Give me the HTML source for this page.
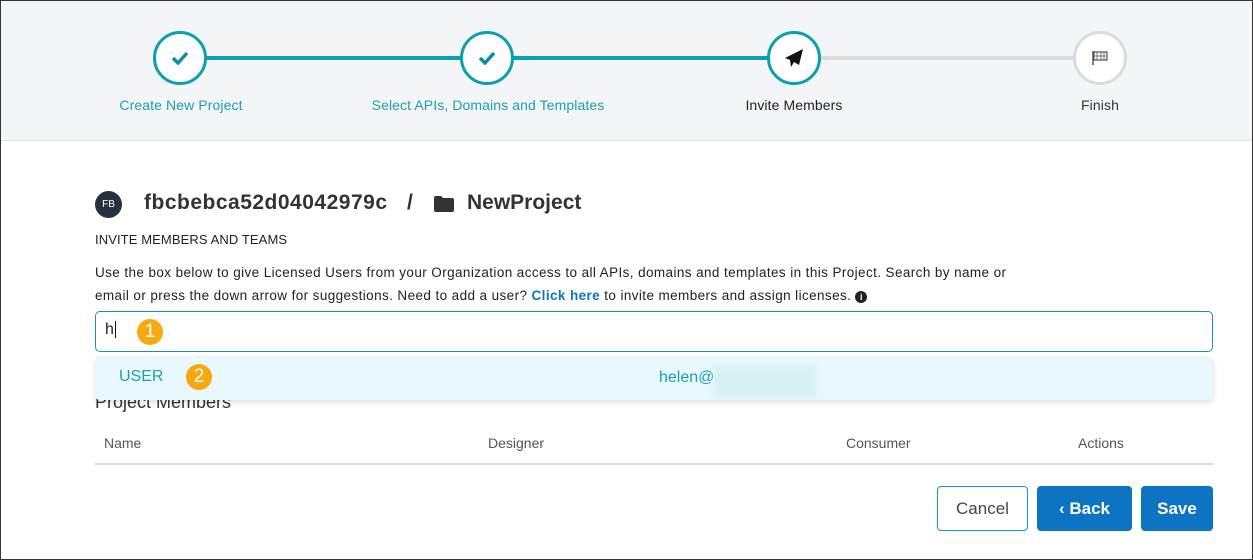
<!DOCTYPE html><html><head><style>
*{box-sizing:border-box;margin:0;padding:0}
body{width:1253px;height:560px;overflow:hidden;font-family:"Liberation Sans",sans-serif;background:#fff;position:relative}
.top{position:absolute;left:0;top:0;width:1253px;height:141px;background:#f4f5f7;border-bottom:1px solid #e3e5e8}
.line{position:absolute;height:4px;top:56px}
.c{position:absolute;width:54px;height:54px;border-radius:50%;background:#fff;border:3px solid #0c9fb0;top:31px;display:flex;align-items:center;justify-content:center}
.lbl{position:absolute;top:97px;font-size:14px;color:#1a9fb4;width:300px;text-align:center;letter-spacing:.1px}
.abs{position:absolute}
.btn{position:absolute;top:486px;height:45px;border-radius:4px;font-size:17px;display:flex;align-items:center;justify-content:center}
</style></head><body>
<div class="top">
<div class="line" style="left:206px;width:564px;background:#0c9fb0"></div>
<div class="line" style="left:820px;width:256px;background:#d8dce1"></div>
<div class="c" style="left:153px"><svg width="18" height="14" viewBox="0 0 18 14"><path d="M2 7l5 5L16 2" stroke="#0c8fa2" stroke-width="3.5" fill="none"/></svg></div>
<div class="c" style="left:460px"><svg width="18" height="14" viewBox="0 0 18 14"><path d="M2 7l5 5L16 2" stroke="#0c8fa2" stroke-width="3.5" fill="none"/></svg></div>
<div class="c" style="left:767px"><svg width="20" height="20" viewBox="0 0 20 20"><path d="M19 1L1 10l5 2 1 7 3-5 5 3z" fill="#111"/></svg></div>
<div class="c" style="left:1073px;border-color:#d8dce1"><svg width="18" height="16" viewBox="0 0 18 16"><path d="M2 1v14" stroke="#555" stroke-width="1.5"/><path d="M3 2h13v8H3z" fill="none" stroke="#555" stroke-width="1.2"/><path d="M6 2v8M10 2v8M13 2v8M3 6h13" stroke="#777" stroke-width="1"/></svg></div>
<div class="lbl" style="left:31px">Create New Project</div>
<div class="lbl" style="left:338px">Select APIs, Domains and Templates</div>
<div class="lbl" style="left:644px;color:#222">Invite Members</div>
<div class="lbl" style="left:950px;color:#333">Finish</div>
</div>
<div class="abs" style="left:95px;top:191px;width:27px;height:27px;border-radius:50%;background:#27303d;color:#fff;font-size:10px;display:flex;align-items:center;justify-content:center">FB</div>
<div class="abs" style="left:144px;top:191px;font-size:21px;font-weight:bold;color:#333;letter-spacing:.5px">fbcbebca52d04042979c</div>
<div class="abs" style="left:407px;top:191px;font-size:21px;font-weight:bold;color:#333">/</div>
<svg class="abs" style="left:434px;top:196px" width="20" height="16" viewBox="0 0 20 16"><path d="M0 2q0-2 2-2h5l2 2h9q2 0 2 2v10q0 2-2 2H2q-2 0-2-2z" fill="#333"/></svg>
<div class="abs" style="left:467px;top:191px;font-size:21px;font-weight:bold;color:#333">NewProject</div>
<div class="abs" style="left:95px;top:232px;font-size:13px;color:#222;letter-spacing:.1px">INVITE MEMBERS AND TEAMS</div>
<div class="abs" style="left:95px;top:261px;font-size:13.5px;color:#222;line-height:23px;width:935px;letter-spacing:.4px">Use the box below to give Licensed Users from your Organization access to all APIs, domains and templates in this Project. Search by name or email or press the down arrow for suggestions. Need to add a user? <b style="color:#0c74c2">Click here</b> to invite members and assign licenses. <span style="display:inline-block;width:12px;height:12px;border-radius:50%;background:#222;color:#fff;font-size:9px;text-align:center;line-height:12px;font-weight:bold">i</span></div>
<div class="abs" style="left:95px;top:311px;width:1118px;height:41px;border:1px solid #1a93a8;border-radius:5px"></div>
<div class="abs" style="left:105px;top:321px;font-size:16px;color:#222">h<span style="border-left:1.5px solid #111;margin-left:1px"></span></div>
<div class="abs" style="left:137px;top:319px;width:26px;height:26px;border-radius:50%;background:#f5a90f;color:#fff;font-size:19px;text-align:center;line-height:26px">1</div>
<div class="abs" style="left:95px;top:392px;font-size:18px;color:#333">Project Members</div>
<div class="abs" style="left:95px;top:356px;width:1118px;height:44px;background:#e9f8fc;border-radius:5px;box-shadow:0 3px 6px rgba(0,0,0,.12)"></div>
<div class="abs" style="left:119px;top:368px;font-size:16px;color:#1a9fb4">USER</div>
<div class="abs" style="left:186px;top:364px;width:26px;height:26px;border-radius:50%;background:#f5a90f;color:#fff;font-size:19px;text-align:center;line-height:26px">2</div>
<div class="abs" style="left:659px;top:369px;font-size:16px;color:#1a9fb4">helen@</div>
<div class="abs" style="left:714px;top:366px;width:102px;height:32px;background:#d6f0f4;filter:blur(3px)"></div>
<div class="abs" style="left:104px;top:435px;font-size:14px;color:#555">Name</div>
<div class="abs" style="left:488px;top:435px;font-size:14px;color:#555">Designer</div>
<div class="abs" style="left:846px;top:435px;font-size:14px;color:#555">Consumer</div>
<div class="abs" style="left:1078px;top:435px;font-size:14px;color:#555">Actions</div>
<div class="abs" style="left:95px;top:463px;width:1118px;height:2px;background:#ddd"></div>
<div class="btn" style="left:937px;width:91px;border:1px solid #1a93c8;color:#444">Cancel</div>
<div class="btn" style="left:1037px;width:95px;background:#0c74c2;color:#fff;font-weight:bold">&#8249;&nbsp;Back</div>
<div class="btn" style="left:1141px;width:72px;background:#0c74c2;color:#fff;font-weight:bold">Save</div>
<div class="abs" style="left:0;top:0;width:1253px;height:560px;border:1px solid #333;pointer-events:none"></div>
</body></html>
